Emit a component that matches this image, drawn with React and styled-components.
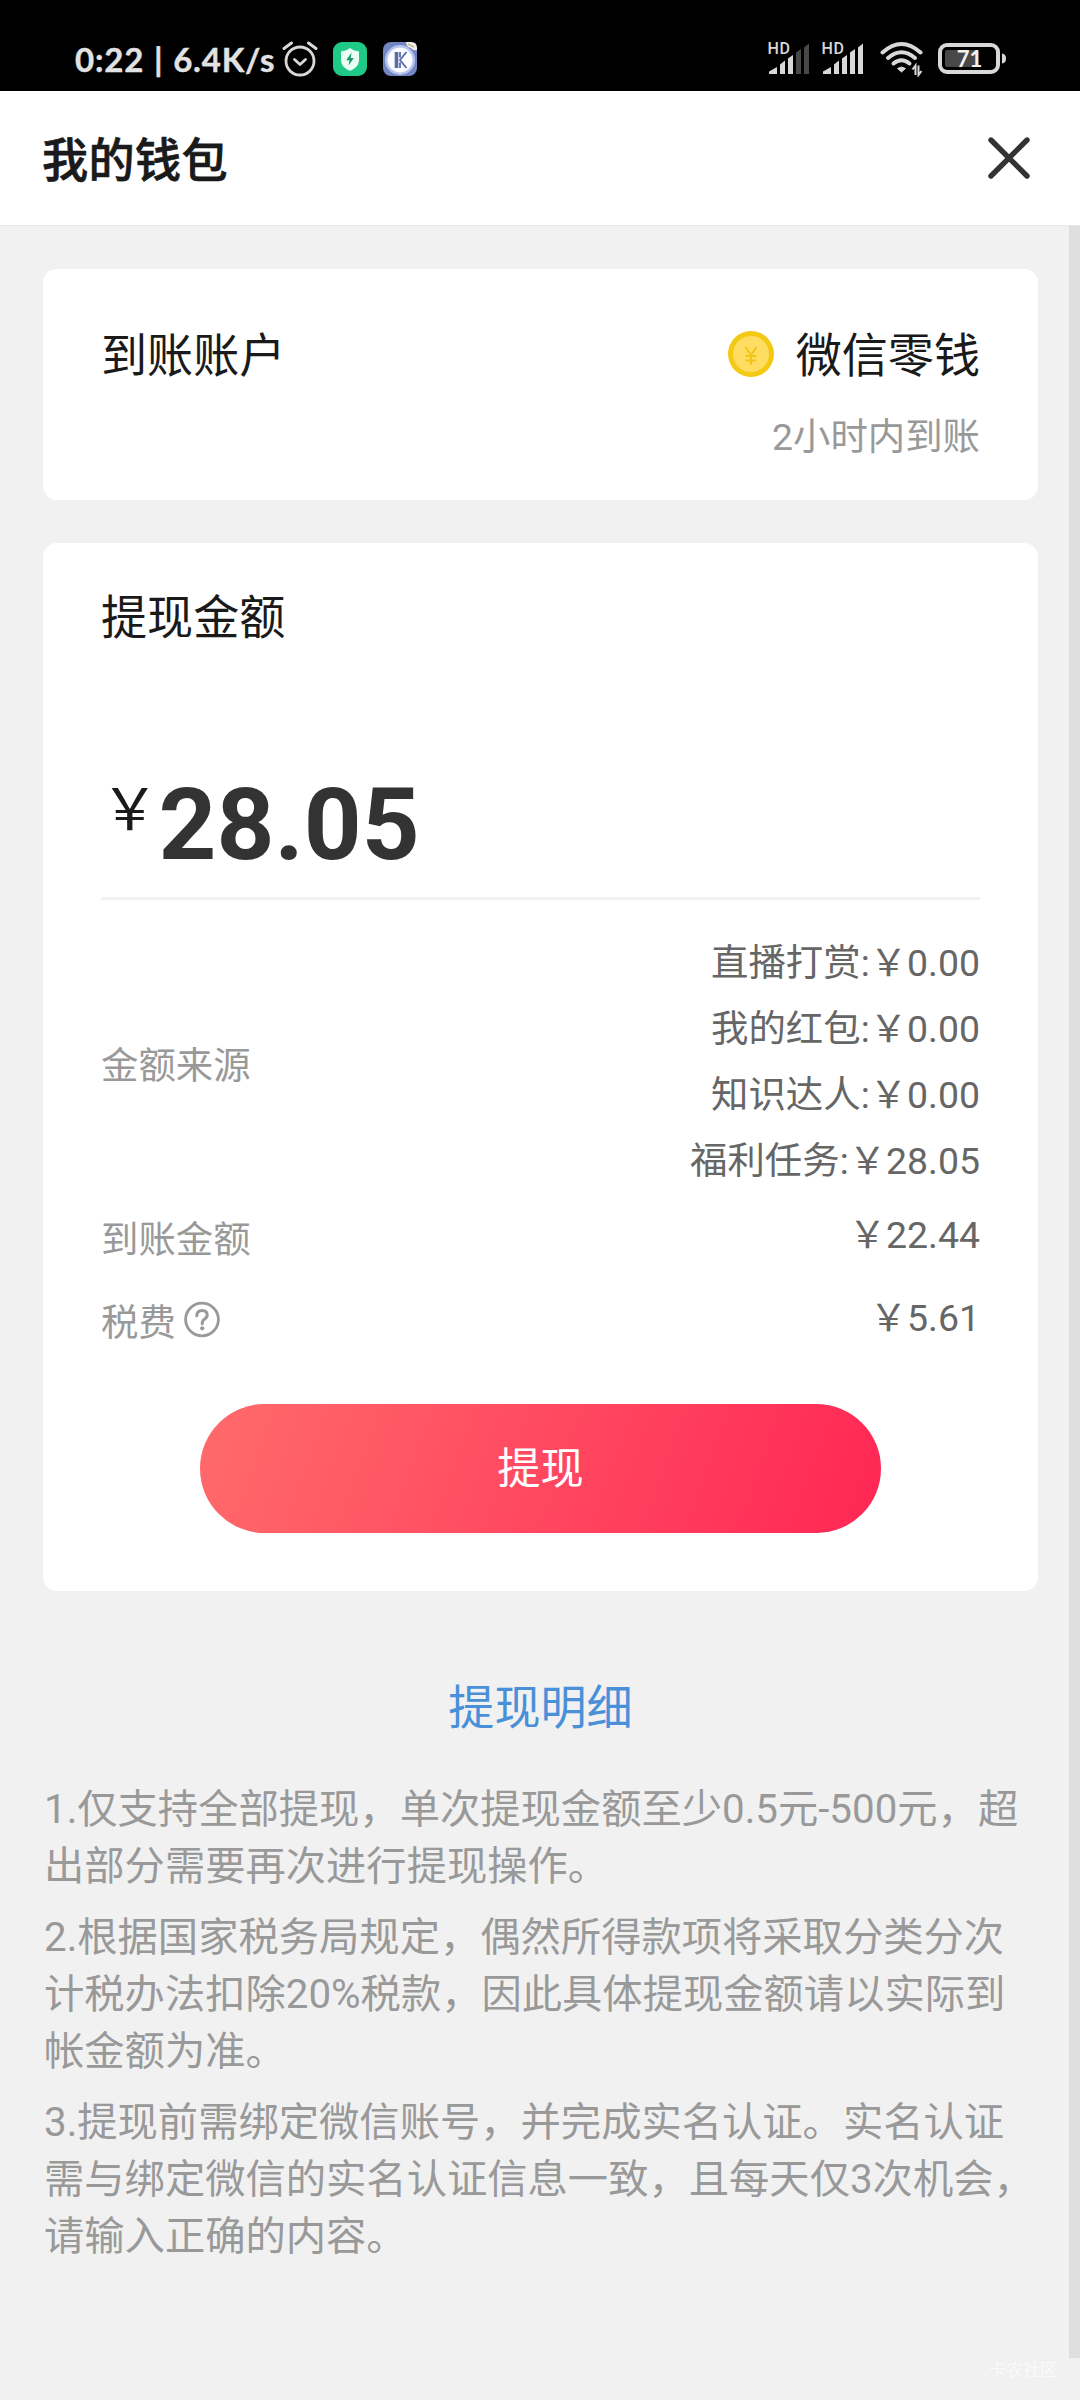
import React from "react";
import styled, { createGlobalStyle } from "styled-components";

const GlobalStyle = createGlobalStyle`
  * {
    box-sizing: border-box;
  }

  body {
    margin: 0;
    background: #f1f1f1;
    font-family: Roboto, "Noto Sans CJK SC", sans-serif;
  }
`;

const Page = styled.div`
  position: relative;
  display: flex;
  flex-direction: column;
  width: 1080px;
  height: 2400px;
  overflow: hidden;
`;

const StatusBar = styled.div`
  display: flex;
  justify-content: space-between;
  height: 91px;
  padding: 29px 73px 0 75px;
  background: #000;
  color: #e2e2e2;
`;

const StatusGroup = styled.div`
  display: flex;
  align-items: center;
  height: 60px;
`;

const StatusText = styled.span`
  width: 207px;
  font-family: Lato, sans-serif;
  font-size: 33px;
  font-weight: 700;
  line-height: 60px;
  letter-spacing: 0.8px;
  word-spacing: 1px;
  white-space: nowrap;
  -webkit-text-stroke: 0.4px #e2e2e2;
`;

const StatusIcon = styled.svg`
  flex: none;
  margin-left: ${(props) => props.$gap || 0}px;
`;

const Header = styled.header`
  display: flex;
  align-items: center;
  justify-content: space-between;
  height: 135px;
  padding: 0 50px 0 42px;
  background: #fff;
  border-bottom: 1px solid #e8e8e8;
`;

const Title = styled.h1`
  margin: 0;
  padding-top: 5px;
  color: #1a1a1a;
  font-size: 46.1px;
  font-weight: 500;
  line-height: 66px;
  letter-spacing: 0.4px;
  -webkit-text-stroke: 0.7px #1a1a1a;
`;

const Body = styled.div`
  display: flex;
  flex: 1;
  justify-content: space-between;
`;

const Content = styled.main`
  width: 1038px;
  padding: 43px 0 0 43px;
`;

const ScrollThumb = styled.div`
  width: 11px;
  height: 2132px;
  background: #dfdfdf;
`;

const Card = styled.section`
  height: ${(props) => props.$height}px;
  margin-bottom: ${(props) => props.$gap || 0}px;
  padding: ${(props) => props.$top}px 58px 0;
  background: #fff;
  border-radius: 14px;
`;

const Row = styled.div`
  display: flex;
  align-items: center;
  justify-content: space-between;
  min-height: ${(props) => props.$height || 0}px;
`;

const CardText = styled.div`
  color: #1a1a1a;
  font-size: 46.1px;
  line-height: 66px;
`;

const Channel = styled(CardText)`
  display: flex;
  align-items: center;
  gap: 22px;

  svg {
    margin-bottom: 5px;
  }
`;

const Hint = styled.div`
  margin-top: 21px;
  color: #999;
  font-size: 37.4px;
  line-height: 54px;
  text-align: right;
`;

const Amount = styled.div`
  display: flex;
  margin-top: 122px;
  margin-bottom: 31px;
  padding-bottom: 20px;
  border-bottom: 3px solid #f1f1f1;
`;

const Currency = styled.span`
  color: #1a1a1a;
  font-size: 57.6px;
  line-height: 76px;
`;

const AmountValue = styled.span`
  color: #333;
  font-size: 101px;
  font-weight: 700;
  line-height: 104px;
`;

const Label = styled.div`
  display: flex;
  align-items: center;
  gap: 8px;
  padding-top: 1px;
  color: #999;
  font-size: 37.4px;
`;

const Value = styled.div`
  color: #666;
  font-size: 37.4px;
  line-height: 65.9px;
  text-align: right;
`;

const WithdrawButton = styled.button`
  display: block;
  width: 681px;
  height: 129px;
  margin: 43px auto 0;
  padding: 0 0 7px;
  border: 0;
  border-radius: 65px;
  background: linear-gradient(110deg, #ff6b6b 0%, #ff2655 100%);
  color: #fff;
  font-family: inherit;
  font-size: 43.2px;
`;

const DetailLink = styled.a`
  display: block;
  margin: 84px 0 40px;
  color: #4a90d9;
  font-size: 46.1px;
  line-height: 66px;
  text-align: center;
`;

const Note = styled.p`
  margin: 0 0 14px;
  padding-left: 1px;
  color: #999;
  font-size: 40.3px;
  line-height: 57px;
  white-space: pre;
`;

const Watermark = styled.div`
  position: absolute;
  right: 23px;
  bottom: 18px;
  color: #fafafa;
  font-size: 17px;
  line-height: 24px;
`;

const sources = [
  { name: "直播打赏", amount: "0.00" },
  { name: "我的红包", amount: "0.00" },
  { name: "知识达人", amount: "0.00" },
  { name: "福利任务", amount: "28.05" },
];

const notes = [
  "1.仅支持全部提现，单次提现金额至少0.5元-500元，超\n出部分需要再次进行提现操作。",
  "2.根据国家税务局规定，偶然所得款项将采取分类分次\n计税办法扣除20%税款，因此具体提现金额请以实际到\n帐金额为准。",
  "3.提现前需绑定微信账号，并完成实名认证。实名认证\n需与绑定微信的实名认证信息一致，且每天仅3次机会，\n请输入正确的内容。",
];

const AlarmIcon = () => (
  <StatusIcon width="36" height="36" viewBox="0 0 36 36" fill="none" stroke="#d8d8d8">
    <circle cx="18" cy="20" r="14" strokeWidth="2.8" />
    <path d="M12.5 18.5L18 23.5L23.5 18.5" strokeWidth="2.8" strokeLinecap="round" strokeLinejoin="round" />
    <path d="M2 7.5L9.5 2M34 7.5L26.5 2" strokeWidth="3" strokeLinecap="round" />
  </StatusIcon>
);

const ShieldIcon = () => (
  <StatusIcon $gap={15} width="34" height="34" viewBox="0 0 34 34">
    <rect width="34" height="34" rx="9" fill="#1fca87" />
    <path d="M17 6C20 8.3 23 9.2 26 9.4V18C26 23 22.5 26.5 17 28.8C11.5 26.5 8 23 8 18V9.4C11 9.2 14 8.3 17 6Z" fill="#eafff6" />
    <path d="M18.6 10.5L13.2 18.2H16.6L15.6 23.6L20.8 16H17.6Z" fill="#17976a" />
  </StatusIcon>
);

const AppIcon = () => (
  <StatusIcon $gap={16} width="34" height="34" viewBox="0 0 34 34">
    <rect width="34" height="34" rx="8" fill="#7386c4" />
    <circle cx="17" cy="18" r="15" fill="#b5c3ee" />
    <circle cx="17" cy="18" r="12.5" fill="#fbfcff" />
    <path d="M13.5 10V26" stroke="#5a6ba6" strokeWidth="3.6" />
    <path d="M17 10V15.5M17 20.5V26M23.5 10L17 18L23.5 26" fill="none" stroke="#5a6ba6" strokeWidth="1.8" />
    <path d="M23 0H28Q34 0 34 6V8Q30 9 28 6Q23 5 23 0Z" fill="#f3efe6" />
    <path d="M25 2L31 5" stroke="#c9b98e" strokeWidth="1.4" />
  </StatusIcon>
);

const SignalIcon = ({ gap, level }) => {
  const bars = [
    "M0 31V28.5L8 24V31Z",
    "M11 31V21.5L16 17.5V31Z",
    "M19 31V15.5L24 12V31Z",
    "M27 31V9.5L32 6V31Z",
    "M35 31V4.5L40 0.5V31Z",
  ];
  return (
    <StatusIcon $gap={gap} width="46" height="42" viewBox="-4 -5 46 42">
      {bars.map((d, index) => (
        <path key={d} d={d} fill={index < level ? "#d8d8d8" : "#484848"} />
      ))}
      <text x="-1.5" y="11" fill="#d8d8d8" fontFamily="Roboto" fontSize="16" fontWeight="500" letterSpacing="0.6">
        HD
      </text>
    </StatusIcon>
  );
};

const WifiIcon = () => (
  <StatusIcon $gap={15} width="43" height="36" viewBox="0 0 43 36" fill="none" stroke="#d8d8d8">
    <g strokeWidth="4" strokeLinecap="round">
      <path d="M2.5 11.5Q21.5 -5.5 40.5 11.5" />
      <path d="M8 17Q21.5 5.5 35 17" />
      <path d="M13.5 22.5Q21.5 16 29.5 22.5" />
    </g>
    <path d="M21.5 31L17.5 27.5Q21.5 24.5 25.5 27.5Z" fill="#d8d8d8" strokeWidth="1" />
    <path d="M35.5 34V24.5L32.5 28.5M38.5 24.5V34L41.5 30" strokeWidth="2" />
  </StatusIcon>
);

const BatteryIcon = () => (
  <StatusIcon $gap={15} width="69" height="32" viewBox="0 0 69 32">
    <rect x="2" y="2" width="58" height="27" rx="7" fill="none" stroke="#d8d8d8" strokeWidth="4" />
    <rect x="7" y="7" width="34" height="17" rx="2" fill="#484848" />
    <path d="M64 10.5Q68 11 68 15.5Q68 20 64 20.5Z" fill="#d8d8d8" />
    <text x="31.5" y="23.5" fill="#f2f2f2" fontFamily="Lato" fontSize="22" fontWeight="700" textAnchor="middle">
      71
    </text>
  </StatusIcon>
);

const CloseIcon = () => (
  <svg width="42" height="42" viewBox="0 0 42 42" fill="none" stroke="#333" strokeWidth="5.4" strokeLinecap="round">
    <path d="M3 3L39 39M39 3L3 39" />
  </svg>
);

const CoinIcon = () => (
  <svg width="46" height="46" viewBox="0 0 46 46">
    <circle cx="23" cy="23" r="23" fill="#f4c913" />
    <circle cx="23" cy="23" r="18" fill="#ffdc62" />
    <path
      d="M17.5 16L23 24L28.5 16M23 24V34M17.5 25H28.5M17.5 29.5H28.5"
      fill="none"
      stroke="#f2c619"
      strokeWidth="2.2"
    />
  </svg>
);

const HelpIcon = () => (
  <svg width="36" height="37" viewBox="0 0 36 36" fill="none" stroke="#999">
    <circle cx="18" cy="18" r="16.4" strokeWidth="2.8" />
    <path d="M12.8 14.2Q13 9 18 9Q23.2 9 23.2 13.6Q23.2 16 20.4 17.8Q18.2 19.3 18.2 22.3" strokeWidth="3" strokeLinecap="round" />
    <circle cx="18.2" cy="26.8" r="2.1" fill="#999" stroke="none" />
  </svg>
);

const App = () => {
  return (
    <Page>
      <GlobalStyle />
      <StatusBar>
        <StatusGroup>
          <StatusText>0:22 | 6.4K/s</StatusText>
          <AlarmIcon />
          <ShieldIcon />
          <AppIcon />
        </StatusGroup>
        <StatusGroup>
          <SignalIcon level={3} />
          <SignalIcon gap={8} level={5} />
          <WifiIcon />
          <BatteryIcon />
        </StatusGroup>
      </StatusBar>

      <Header>
        <Title>我的钱包</Title>
        <CloseIcon />
      </Header>

      <Body>
        <Content>
          <Card $height={231} $top={54} $gap={43}>
            <Row>
              <CardText>到账账户</CardText>
              <Channel>
                <CoinIcon />
                微信零钱
              </Channel>
            </Row>
            <Hint>2小时内到账</Hint>
          </Card>

          <Card $height={1048} $top={42}>
            <CardText>提现金额</CardText>
            <Amount>
              <Currency>￥</Currency>
              <AmountValue>28.05</AmountValue>
            </Amount>
            <Row>
              <Label>金额来源</Label>
              <div>
                {sources.map((source) => (
                  <Value key={source.name}>
                    {source.name}:￥{source.amount}
                  </Value>
                ))}
              </div>
            </Row>
            <Row $height={83}>
              <Label>到账金额</Label>
              <Value>￥22.44</Value>
            </Row>
            <Row $height={83}>
              <Label>
                税费
                <HelpIcon />
              </Label>
              <Value>￥5.61</Value>
            </Row>
            <WithdrawButton>提现</WithdrawButton>
          </Card>

          <DetailLink>提现明细</DetailLink>
          {notes.map((note) => (
            <Note key={note}>{note}</Note>
          ))}
        </Content>
        <ScrollThumb />
      </Body>

      <Watermark>卡农社区</Watermark>
    </Page>
  );
};

export default App;
